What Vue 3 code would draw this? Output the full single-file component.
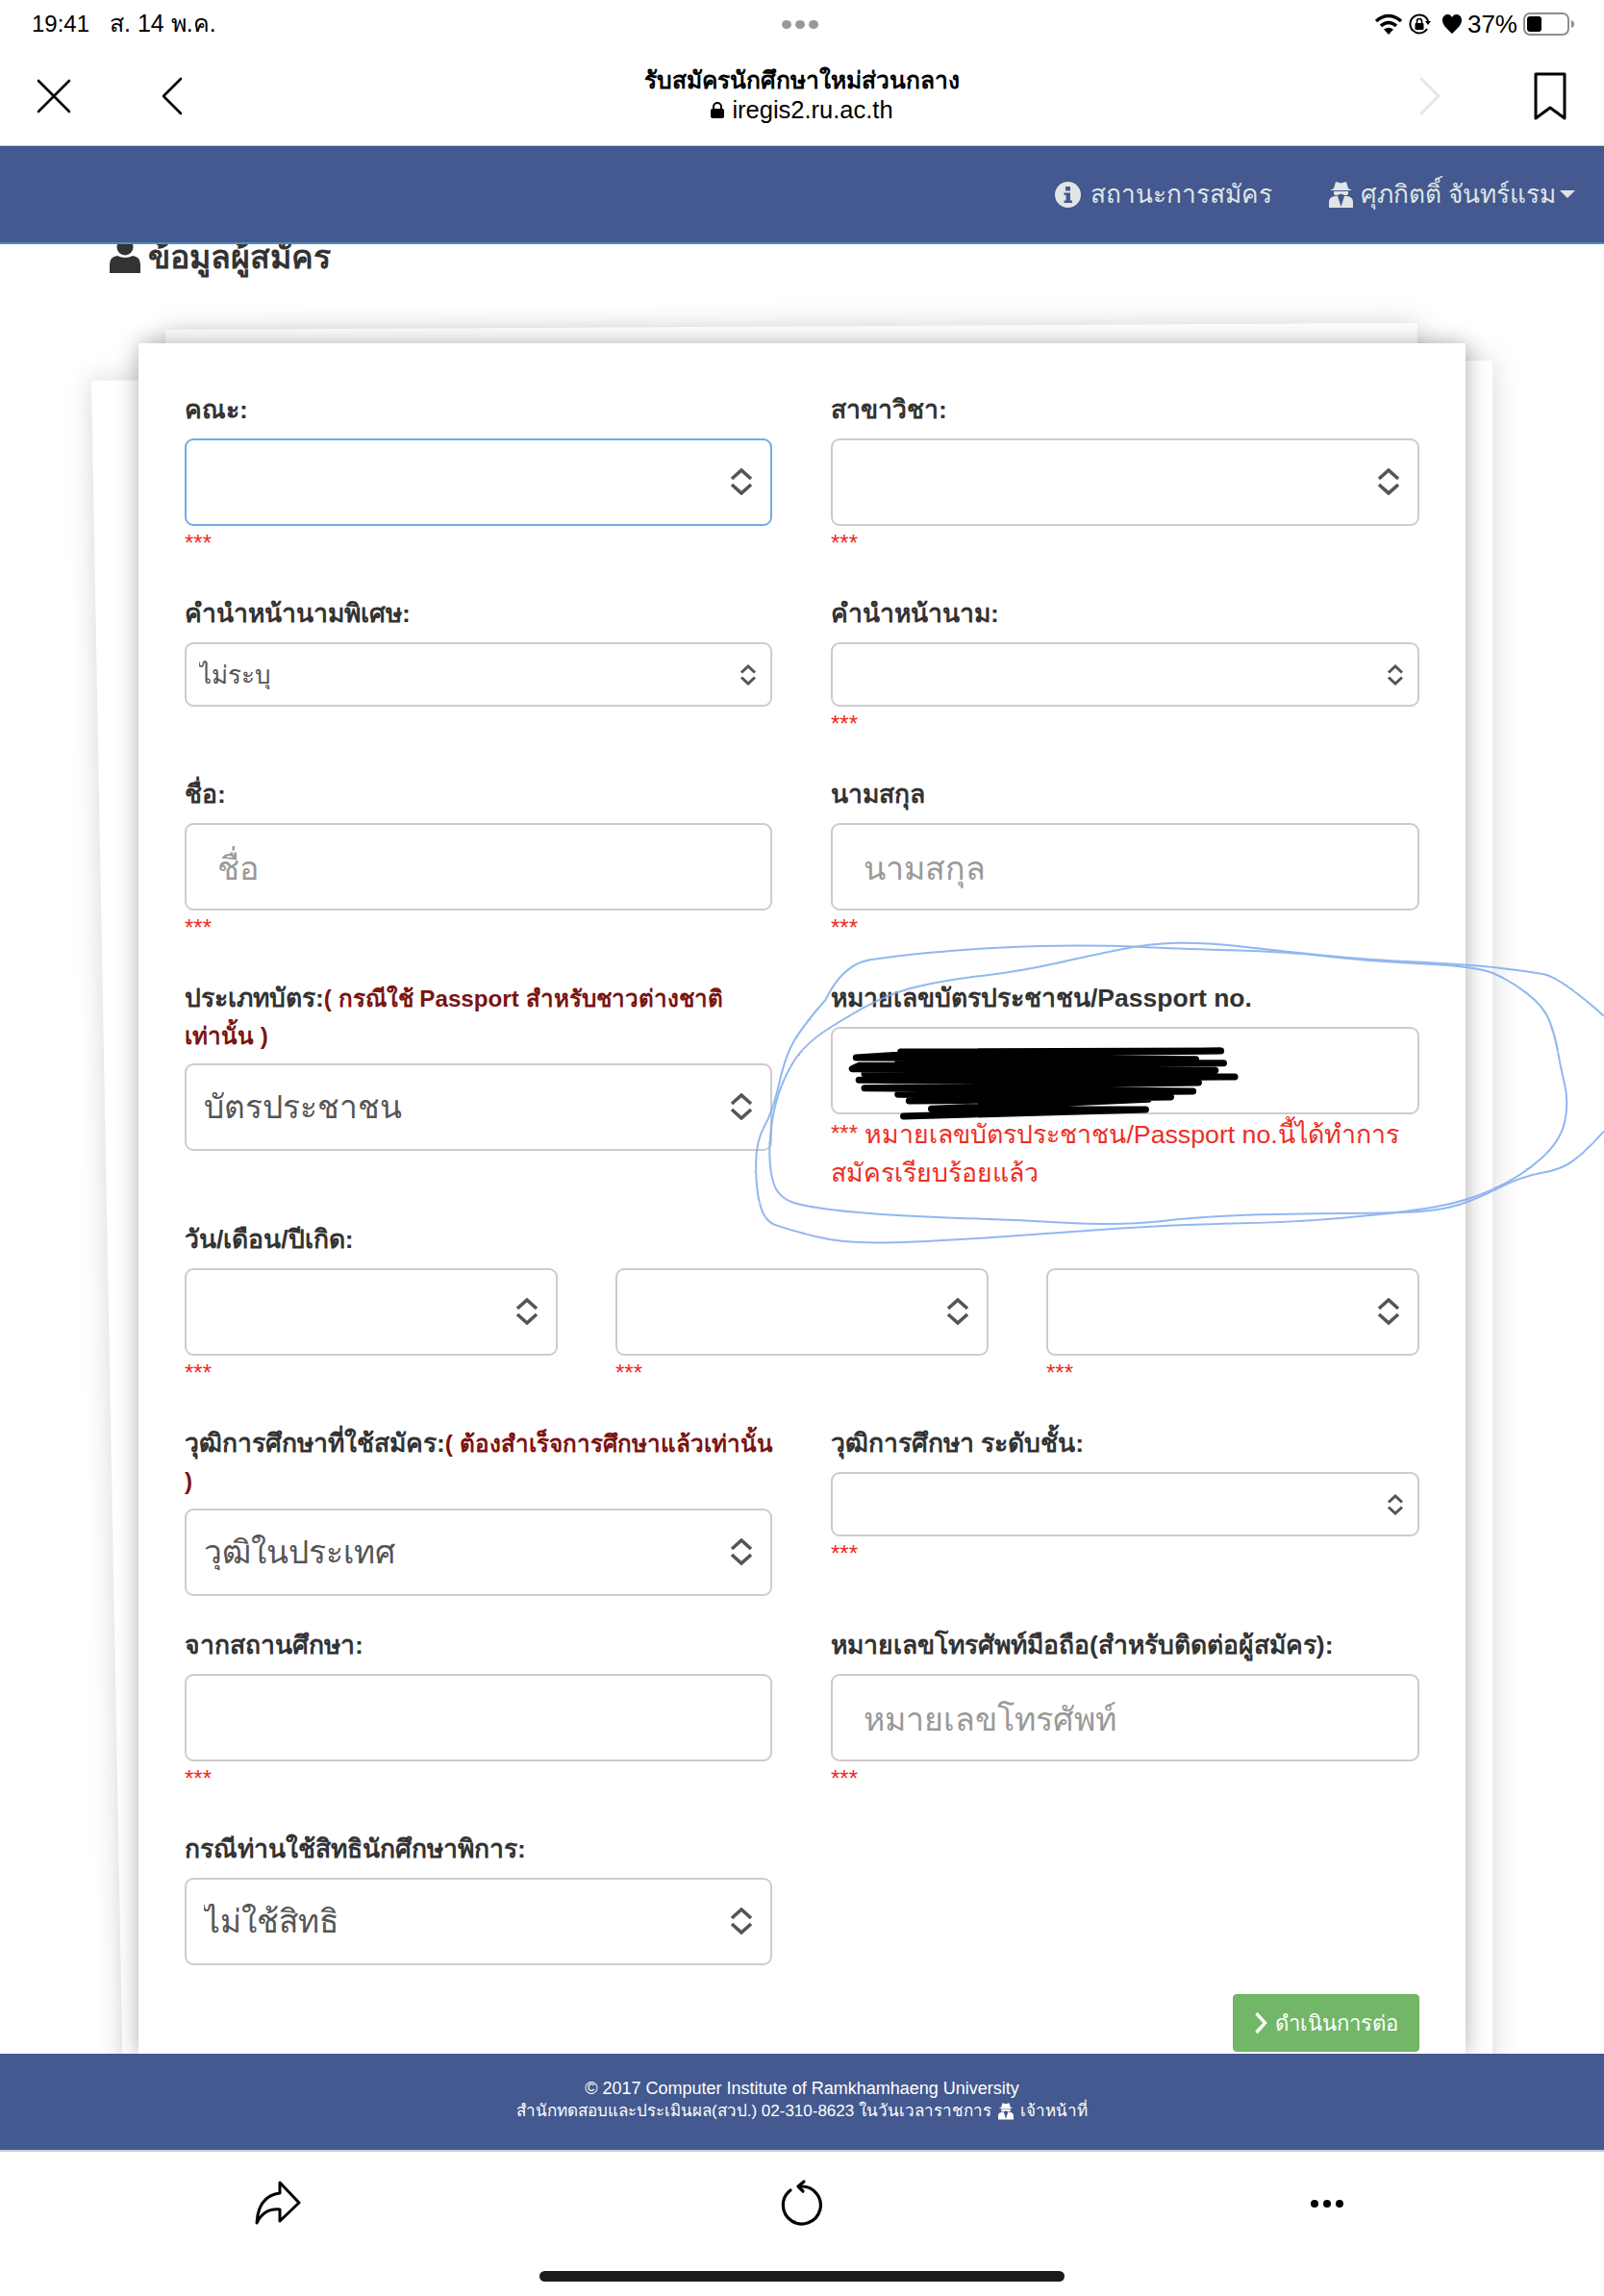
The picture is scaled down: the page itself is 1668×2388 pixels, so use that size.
<script setup>
const rows = [
  [
    { label: 'คณะ:', kind: 'select', big: true, focus: true, hint: true },
    { label: 'สาขาวิชา:', kind: 'select', big: true, hint: true },
  ],
  [
    { label: 'คำนำหน้านามพิเศษ:', kind: 'select', value: 'ไม่ระบุ' },
    { label: 'คำนำหน้านาม:', kind: 'select', hint: true },
  ],
  [
    { label: 'ชื่อ:', kind: 'input', placeholder: 'ชื่อ', hint: true },
    { label: 'นามสกุล', kind: 'input', placeholder: 'นามสกุล', hint: true },
  ],
  [
    {
      label: 'ประเภทบัตร:',
      note: ['( กรณีใช้ Passport สำหรับชาวต่างชาติ', 'เท่านั้น )'],
      kind: 'select',
      big: true,
      value: 'บัตรประชาชน',
    },
    {
      label: 'หมายเลขบัตรประชาชน/Passport no.',
      kind: 'input',
      error: ['หมายเลขบัตรประชาชน/Passport no.นี้ได้ทำการ', 'สมัครเรียบร้อยแล้ว'],
    },
  ],
  'dates',
  [
    {
      label: 'วุฒิการศึกษาที่ใช้สมัคร:',
      note: ['( ต้องสำเร็จการศึกษาแล้วเท่านั้น', ')'],
      kind: 'select',
      big: true,
      value: 'วุฒิในประเทศ',
    },
    { label: 'วุฒิการศึกษา ระดับชั้น:', kind: 'select', hint: true },
  ],
  [
    { label: 'จากสถานศึกษา:', kind: 'input', hint: true },
    { label: 'หมายเลขโทรศัพท์มือถือ(สำหรับติดต่อผู้สมัคร):', kind: 'input', placeholder: 'หมายเลขโทรศัพท์', hint: true },
  ],
  [
    { label: 'กรณีท่านใช้สิทธินักศึกษาพิการ:', kind: 'select', big: true, value: 'ไม่ใช้สิทธิ' },
    null,
  ],
]

// ลายเส้นปากกาสีฟ้า พิกัดอ้างอิงจาก viewBox ของ overlay
const loopA = [[1568,290],[1490,170],[1430,150],[1330,130],[1150,115],[1000,90],[850,60],[750,65],[650,100],[520,150],[400,175],[300,210],[220,280],[130,380],[90,500],[72,620],[68,760],[85,860],[150,890],[300,915],[500,925],[700,945],[850,915],[1050,905],[1250,905],[1330,870],[1420,790],[1490,770],[1530,720],[1568,650]]
const loopB = [[170,240],[200,130],[300,100],[500,72],[680,70],[800,80],[1000,90],[1150,120],[1340,135],[1400,180],[1460,260],[1480,350],[1490,450],[1505,560],[1490,680],[1420,790],[1320,870],[1200,905],[1000,935],[800,940],[600,965],[350,995],[200,1000],[100,955],[60,930],[45,830],[45,680],[75,590],[100,400],[140,300],[170,240]]

const smooth = (pts) => {
  let d = `M${pts[0][0]} ${pts[0][1]}`
  for (let i = 1; i < pts.length - 1; i++) {
    const mx = (pts[i][0] + pts[i + 1][0]) / 2
    const my = (pts[i][1] + pts[i + 1][1]) / 2
    d += ` Q${pts[i][0]} ${pts[i][1]} ${mx} ${my}`
  }
  const last = pts[pts.length - 1]
  return d + ` L${last[0]} ${last[1]}`
}

const blueA = smooth(loopA)
const blueB = smooth(loopB)
const blackScribble = 'M305 402 L880 399 L300 412 L225 420 L835 425 L300 430 L885 437 L230 445 L218 455 L870 460 L240 470 L905 480 L230 490 L840 498 L240 515 L830 525 L300 535 L790 543 L320 555 L750 550 L360 580 L745 582 L310 603 L520 590'
</script>

<template>
  <div class="page">
    <div class="status-bar">
      <div class="status-left">
        <span>19:41</span>
        <span class="status-date">ส. 14 พ.ค.</span>
      </div>
      <div class="status-dots"><i></i><i></i><i></i></div>
      <div class="status-right">
        <svg width="30" height="24" viewBox="0 0 30 24">
          <path d="M2 9 Q15 -2 28 9 M7 14 Q15 7 23 14" fill="none" stroke="#000" stroke-width="3.6" />
          <path d="M10 17.5 Q15 14 20 17.5 L15 23 Z" fill="#000" />
        </svg>
        <svg class="ic-rotate" width="24" height="24" viewBox="0 0 24 24">
          <path d="M21 9 A9.5 9.5 0 1 0 20 17" fill="none" stroke="#000" stroke-width="2" />
          <path d="M18 9 L24 9 L21 13 Z" fill="#000" />
          <rect x="7.5" y="11" width="9" height="7" rx="1" fill="#000" />
          <path d="M9.5 11 V9 A2.5 2.5 0 0 1 14.5 9 V11" fill="none" stroke="#000" stroke-width="1.6" />
        </svg>
        <svg class="ic-heart" width="20" height="20" viewBox="0 0 20 20">
          <path d="M10 20 C4 14 0 11 0 6 C0 2 3 0 5.5 0 C7.5 0 9 1 10 3 C11 1 12.5 0 14.5 0 C17 0 20 2 20 6 C20 11 16 14 10 20 Z" fill="#000" />
        </svg>
        <span class="battery-label">37%</span>
        <svg class="ic-battery" width="54" height="24" viewBox="0 0 54 24">
          <rect x="1" y="1" width="46" height="22" rx="6" fill="none" stroke="#8e8e8e" stroke-width="2" />
          <rect x="4" y="4" width="15" height="16" rx="3" fill="#000" />
          <path d="M50 8 Q53 9 53 12 Q53 15 50 16 Z" fill="#8e8e8e" />
        </svg>
      </div>
    </div>

    <div class="browser-bar">
      <svg class="tool-close" width="36" height="36" viewBox="0 0 36 36">
        <path d="M2 2 L34 34 M34 2 L2 34" stroke="#000" stroke-width="2.6" stroke-linecap="round" />
      </svg>
      <svg class="tool-back" width="24" height="40" viewBox="0 0 24 40">
        <path d="M21 2 L3 20 L21 38" fill="none" stroke="#000" stroke-width="2.6" stroke-linecap="round" stroke-linejoin="round" />
      </svg>
      <div class="page-title">
        <div class="title-text">รับสมัครนักศึกษาใหม่ส่วนกลาง</div>
        <div class="title-url">
          <svg width="14" height="17" viewBox="0 0 14 17">
            <rect x="0" y="7" width="14" height="10" rx="2" fill="#000" />
            <path d="M3 7 V5 A4 4 0 0 1 11 5 V7" fill="none" stroke="#000" stroke-width="2" />
          </svg>
          <span>iregis2.ru.ac.th</span>
        </div>
      </div>
      <svg class="tool-forward" width="24" height="40" viewBox="0 0 24 40">
        <path d="M3 2 L21 20 L3 38" fill="none" stroke="#e4e4e4" stroke-width="2.6" stroke-linecap="round" stroke-linejoin="round" />
      </svg>
      <svg class="tool-mark" width="34" height="50" viewBox="0 0 34 50">
        <path d="M2 2 H32 V48 L17 37 L2 48 Z" fill="none" stroke="#000" stroke-width="3" stroke-linejoin="round" />
      </svg>
    </div>

    <nav class="navbar">
      <a class="nav-item">
        <svg width="27" height="27" viewBox="0 0 27 27">
          <circle cx="13.5" cy="13.5" r="13.5" fill="#e0e6e6" />
          <rect x="11" y="5" width="5" height="4.5" fill="#43598f" />
          <path d="M9.5 11.5 H16 V19.5 H18 V22 H9.5 V19.5 H11.5 V14 H9.5 Z" fill="#43598f" />
        </svg>
        <span>สถานะการสมัคร</span>
      </a>
      <a class="nav-item nav-user">
        <svg width="25" height="28" viewBox="0 0 25 28">
          <path d="M5 8 L7 1 L12.5 2.5 L18 1 L20 8 L24 10 H1 Z" fill="#e0e6e6" />
          <path d="M5 11 H20 V14 Q18 16 16 15 L12.5 13.5 L9 15 Q7 16 5 14 Z" fill="#e0e6e6" />
          <path d="M0 28 V22 Q0 17 6 16 H9 L12.5 27 L16 16 H19 Q25 17 25 22 V28 Z" fill="#e0e6e6" />
        </svg>
        <span>ศุภกิตติ์ จันทร์แรม</span>
        <i class="caret"></i>
      </a>
    </nav>

    <main class="content">
      <h3 class="section-title">
        <svg width="32" height="34" viewBox="0 0 32 34">
          <circle cx="16" cy="7" r="8.5" fill="#333" />
          <path d="M0 34 V25 Q0 17 8 16 Q16 20 24 16 Q32 17 32 25 V34 Z" fill="#333" />
        </svg>
        <span>ข้อมูลผู้สมัคร</span>
      </h3>

      <div class="stack">
        <div class="sheet-wrap"><div class="sheet sheet-back"></div></div>
        <div class="sheet-wrap"><div class="sheet sheet-mid"></div></div>

        <form class="card" @submit.prevent>
          <template v-for="(row, r) in rows" :key="r">
            <div v-if="row === 'dates'" class="form-row">
              <label class="field-label">วัน/เดือน/ปีเกิด:</label>
              <div class="date-grid">
                <div v-for="d in 3" :key="d">
                  <div class="select-box">
                    <select class="control big"></select>
                    <svg class="arrows" width="24" height="28" viewBox="0 0 24 28">
                      <path d="M2 11 L12 2 L22 11 M2 17 L12 26 L22 17" fill="none" stroke="#555" stroke-width="3.6" />
                    </svg>
                  </div>
                  <div class="hint">***</div>
                </div>
              </div>
            </div>

            <div v-else class="form-row two-col">
              <template v-for="(f, c) in row" :key="c">
                <div v-if="f" :class="{ 'has-note': f.note }">
                  <label class="field-label">{{ f.label }}<span v-if="f.note" class="note">{{ f.note[0] }}<br />{{ f.note[1] }}</span></label>
                  <div v-if="f.kind === 'select'" class="select-box">
                    <select class="control" :class="{ big: f.big, focus: f.focus, small: !f.big }">
                      <option>{{ f.value }}</option>
                    </select>
                    <svg v-if="f.big" class="arrows" width="24" height="28" viewBox="0 0 24 28">
                      <path d="M2 11 L12 2 L22 11 M2 17 L12 26 L22 17" fill="none" stroke="#555" stroke-width="3.6" />
                    </svg>
                    <svg v-else class="arrows arrows-small" width="18" height="22" viewBox="0 0 18 22">
                      <path d="M2 8.5 L9 2 L16 8.5 M2 13.5 L9 20 L16 13.5" fill="none" stroke="#555" stroke-width="3" />
                    </svg>
                  </div>
                  <input v-else class="control big text" type="text" :placeholder="f.placeholder" />
                  <div v-if="f.hint" class="hint">***</div>
                  <div v-if="f.error" class="error"><span class="stars">***</span> {{ f.error[0] }}<br />{{ f.error[1] }}</div>
                </div>
                <div v-else></div>
              </template>
            </div>
          </template>

          <div class="actions">
            <button class="btn-next" type="button">
              <svg width="14" height="24" viewBox="0 0 14 24">
                <path d="M2.5 2 L11.5 12 L2.5 22" fill="none" stroke="#fff" stroke-width="3.4" />
              </svg>
              <span>ดำเนินการต่อ</span>
            </button>
          </div>
        </form>
      </div>
    </main>

    <footer class="site-footer">
      <div>© 2017 Computer Institute of Ramkhamhaeng University</div>
      <div class="footer-line">
        <span>สำนักทดสอบและประเมินผล(สวป.) 02-310-8623 ในวันเวลาราชการ</span>
        <svg width="16" height="19" viewBox="0 0 25 28">
          <path d="M5 8 L7 1 L12.5 2.5 L18 1 L20 8 L24 10 H1 Z" fill="#fff" />
          <path d="M5 11 H20 V14 Q18 16 16 15 L12.5 13.5 L9 15 Q7 16 5 14 Z" fill="#fff" />
          <path d="M0 28 V22 Q0 17 6 16 H9 L12.5 27 L16 16 H19 Q25 17 25 22 V28 Z" fill="#fff" />
        </svg>
        <span>เจ้าหน้าที่</span>
      </div>
    </footer>

    <div class="bottom-bar">
      <div class="bottom-icons">
        <svg width="90" height="80" viewBox="0 0 90 80">
          <path d="M17 62 C18 44 26 33 41 31 V20 L61 41 L41 60 V48 C30 47 22 52 17 62 Z" fill="none" stroke="#000" stroke-width="3" stroke-linejoin="round" stroke-linecap="round" />
        </svg>
        <svg width="90" height="80" viewBox="0 0 90 80">
          <path d="M33 28 A19.5 19.5 0 1 0 44 24" fill="none" stroke="#000" stroke-width="3.2" stroke-linecap="round" />
          <path d="M47 19 L41 24 L46 29" fill="none" stroke="#000" stroke-width="3.2" stroke-linecap="round" stroke-linejoin="round" />
        </svg>
        <svg width="90" height="80" viewBox="0 0 90 80">
          <circle cx="39" cy="42" r="4" fill="#000" />
          <circle cx="52" cy="42" r="4" fill="#000" />
          <circle cx="65" cy="42" r="4" fill="#000" />
        </svg>
      </div>
      <div class="home-bar"></div>
    </div>

    <!-- รอยปากกาที่เขียนทับบนภาพ -->
    <svg class="scribble" viewBox="0 0 1568 1080" preserveAspectRatio="none">
      <defs>
        <filter id="pencil" x="-5%" y="-5%" width="110%" height="110%">
          <feTurbulence type="fractalNoise" baseFrequency="0.9" numOctaves="2" seed="4" />
          <feDisplacementMap in="SourceGraphic" scale="3" />
        </filter>
      </defs>
      <path :d="blackScribble" fill="none" stroke="#000" stroke-width="7" stroke-linecap="round" stroke-linejoin="round" vector-effect="non-scaling-stroke" />
      <g filter="url(#pencil)" opacity="0.85">
        <path :d="blueA" fill="none" stroke="#7fabee" stroke-width="2" vector-effect="non-scaling-stroke" />
        <path :d="blueB" fill="none" stroke="#7fabee" stroke-width="2" vector-effect="non-scaling-stroke" />
      </g>
    </svg>
  </div>
</template>

<style scoped>
.page {
  position: relative;
  display: flex;
  flex-direction: column;
  width: 1668px;
  height: 2388px;
  overflow: hidden;
  background: #fff;
  color: #333;
  font-family: "Liberation Sans", "Noto Sans", sans-serif;
}

.status-bar {
  display: flex;
  align-items: center;
  justify-content: space-between;
  flex: none;
  height: 50px;
  padding: 0 30px 3px 33px;
  box-sizing: border-box;
  position: relative;
  color: #000;
  font-size: 24px;
}
.status-left {
  display: flex;
  align-items: baseline;
  gap: 21px;
}
.status-date {
  font-size: 25px;
}
.status-dots {
  position: absolute;
  left: 813px;
  top: 21px;
  display: flex;
  gap: 4px;
}
.status-dots i {
  width: 10px;
  height: 9px;
  border-radius: 50%;
  background: #999;
}
.status-right {
  display: flex;
  align-items: center;
  margin-top: 3px;
}
.ic-rotate {
  margin-left: 5px;
}
.ic-heart {
  margin-left: 12px;
}
.battery-label {
  margin-left: 6px;
  font-size: 26px;
}
.ic-battery {
  margin-left: 6px;
}

.browser-bar {
  position: relative;
  display: flex;
  align-items: center;
  flex: none;
  height: 102px;
  padding-bottom: 2px;
  box-sizing: border-box;
  border-bottom: 1px solid #c5c9d2;
}
.tool-close {
  margin-left: 38px;
}
.tool-back {
  margin-left: 93px;
}
.page-title {
  position: absolute;
  left: 0;
  right: 0;
  top: 16px;
  text-align: center;
  color: #000;
}
.title-text {
  font-size: 24.6px;
  font-weight: 700;
  line-height: 36px;
}
.title-url {
  display: flex;
  align-items: center;
  justify-content: center;
  gap: 8px;
  font-size: 25.5px;
  line-height: 24px;
}
.tool-forward {
  margin-left: auto;
  margin-right: 96px;
}
.tool-mark {
  margin-right: 39px;
}

.navbar {
  position: relative;
  z-index: 2;
  display: flex;
  align-items: center;
  justify-content: flex-end;
  gap: 59px;
  flex: none;
  height: 102px;
  padding-right: 30px;
  box-sizing: border-box;
  background: #43598f;
  border-bottom: 2px solid #4f8fb5;
  color: #dfe5e5;
  font-size: 26.2px;
}
.nav-item {
  display: flex;
  align-items: center;
  gap: 10px;
}
.nav-user {
  gap: 8px;
}
.caret {
  width: 0;
  height: 0;
  margin-left: -4px;
  border-left: 8px solid transparent;
  border-right: 8px solid transparent;
  border-top: 8px solid #dfe5e5;
}

.content {
  flex: 1;
  min-height: 0;
  overflow: hidden;
}
.section-title {
  display: flex;
  align-items: center;
  gap: 8px;
  height: 40px;
  margin: -7px 0 0 114px;
  font-size: 34px;
  line-height: 40px;
  font-weight: 700;
}
.stack {
  position: relative;
  margin: 70px 144px 0;
}
.sheet-wrap {
  position: absolute;
  inset: 0;
  filter: drop-shadow(0 0 14px rgba(0, 0, 0, 0.16));
}
.sheet {
  position: absolute;
  background: #fff;
}
.sheet-back {
  left: -49px;
  top: 18px;
  width: 1457px;
  height: 1800px;
  clip-path: polygon(0 21px, 100% 0, 100% 100%, 33px 100%);
}
.sheet-mid {
  left: 28px;
  top: -21px;
  width: 1302px;
  height: 100px;
  clip-path: polygon(0 7px, 100% 0, 100% 100%, 0 100%);
}
.card {
  position: relative;
  padding: 50px 48px 3px;
  background: #fff;
  box-shadow: 0 0 22px rgba(0, 0, 0, 0.32);
}

.form-row {
  margin-bottom: 30px;
}
.two-col {
  display: grid;
  grid-template-columns: 611px 612px;
  column-gap: 61px;
}
.date-grid {
  display: grid;
  grid-template-columns: repeat(3, 388px);
  column-gap: 60px;
}
.field-label {
  display: block;
  margin-bottom: 11px;
  font-size: 26.5px;
  line-height: 38px;
  font-weight: 700;
  color: #333;
  white-space: nowrap;
}
.has-note .field-label {
  margin-bottom: 9px;
}
.has-note .select-box {
  margin-bottom: 2px;
}
.note {
  font-size: 24.2px;
  color: #7b1410;
}
.select-box {
  position: relative;
}
.control {
  display: block;
  width: 100%;
  box-sizing: border-box;
  padding: 0 18px;
  border: 2px solid #ccc;
  border-radius: 9px;
  background: #fff;
  color: #555;
  font-family: inherit;
  appearance: none;
  outline: none;
}
.control.big {
  height: 91px;
  font-size: 33.5px;
}
.control.small {
  height: 67px;
  padding: 0 13px;
  font-size: 26px;
}
.control.focus {
  border-color: #72abe4;
}
.control.text {
  height: 91px;
  padding: 4px 32px 0;
  font-size: 34px;
}
.control::placeholder {
  color: #999;
}
.arrows {
  position: absolute;
  right: 20px;
  top: 31px;
  pointer-events: none;
}
.arrows-small {
  right: 16px;
  top: 23px;
}
.hint {
  margin: 6px 0 12px;
  color: #f02a1e;
  font-size: 24px;
  line-height: 24px;
}
.error {
  color: #ee2e24;
  font-size: 26.7px;
  line-height: 40px;
  white-space: nowrap;
}
.stars {
  font-size: 24px;
  vertical-align: 2px;
}

.actions {
  display: flex;
  justify-content: flex-end;
}
.btn-next {
  display: flex;
  align-items: center;
  gap: 8px;
  height: 60px;
  padding: 0 21px;
  border: 1px solid #6bb25f;
  border-radius: 4px;
  background: #72b768;
  color: #fff;
  font-family: inherit;
  font-size: 22.2px;
}

.site-footer {
  position: relative;
  z-index: 2;
  flex: none;
  height: 100px;
  padding-top: 25px;
  box-sizing: border-box;
  background: #43598f;
  color: #fff;
  font-size: 18px;
  line-height: 23px;
  text-align: center;
}
.footer-line {
  display: flex;
  align-items: center;
  justify-content: center;
  gap: 7px;
  font-size: 17px;
}

.bottom-bar {
  flex: none;
  height: 152px;
  box-sizing: border-box;
  border-top: 2px solid #c9ccd4;
}
.bottom-icons {
  display: flex;
  justify-content: space-between;
  padding: 12px 250px 0;
}
.home-bar {
  width: 546px;
  height: 11px;
  margin: 32px auto 0;
  border-radius: 6px;
  background: #1c1c1c;
}

.scribble {
  position: absolute;
  left: 760px;
  top: 960px;
  width: 908px;
  height: 360px;
  z-index: 3;
  pointer-events: none;
}
</style>
